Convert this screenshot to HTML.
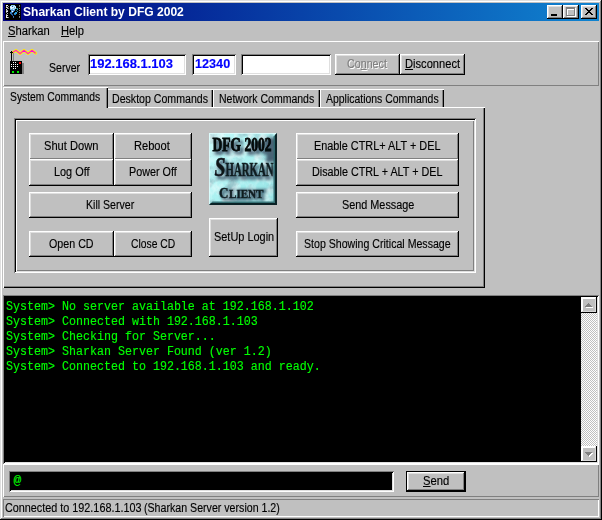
<!DOCTYPE html>
<html>
<head>
<meta charset="utf-8">
<title>Sharkan Client by DFG 2002</title>
<style>
html,body{margin:0;padding:0;}
body{width:602px;height:520px;overflow:hidden;background:#c0c0c0;position:relative;
  font-family:"Liberation Sans",sans-serif;font-size:12px;color:#000;}
*{box-sizing:border-box;}
.abs{position:absolute;}
#win{position:absolute;left:0;top:0;width:602px;height:520px;background:#c0c0c0;
  box-shadow:inset -1px -1px #000,inset 1px 1px #dfdfdf,inset -2px -2px #808080,inset 2px 2px #fff;}
#title{left:3px;top:3px;width:596px;height:18px;background:linear-gradient(90deg,#000080 0%,#1084d0 100%);}
.cap{position:absolute;top:2px;width:16px;height:14px;background:#c0c0c0;
  box-shadow:inset -1px -1px #000,inset 1px 1px #fff,inset -2px -2px #808080,inset 2px 2px #dfdfdf;}
.t{position:absolute;white-space:nowrap;display:inline-block;transform-origin:0 0;-webkit-text-stroke:0.15px currentColor;}
u{text-decoration:underline;text-decoration-thickness:1px;text-underline-offset:1px;text-decoration-skip-ink:none;}
.raised{position:absolute;box-shadow:inset 1px 1px #fff,inset -1px -1px #808080;}
.edit{position:absolute;background:#fff;
  box-shadow:inset 1px 1px #808080,inset -1px -1px #fff,inset 2px 2px #000,inset -2px -2px #dfdfdf;}
.btn{position:absolute;background:#c0c0c0;
  box-shadow:inset -1px -1px #000,inset 1px 1px #fff,inset -2px -2px #808080,inset 2px 2px #dfdfdf;}
.sbtn{box-shadow:inset -1px -1px #000,inset 1px 1px #fff,inset -2px -2px #d8d8d8,inset 2px 2px #fff;}
.tab{position:absolute;background:#c0c0c0;box-shadow:inset 1px 1px #fff,inset -1px 0 #000,inset -2px 0 #808080;}
#conpre{margin:0;font-family:"Liberation Mono",monospace;font-size:11.667px;line-height:13.636px;color:#00ff00;transform:scaleY(1.1);transform-origin:0 0;-webkit-text-stroke:0.15px #00ff00;}
</style>
</head>
<body>
<div id="win">
  <!-- title bar -->
  <div id="title" class="abs">
    <svg class="abs" style="left:2px;top:1px" width="16" height="16" viewBox="0 0 16 16" shape-rendering="crispEdges"><rect width="16" height="16" fill="#000"/><rect x="1" y="1" width="2" height="1" fill="#e8e8e8"/><rect x="1" y="2" width="1" height="1" fill="#a0a0a0"/><rect x="3" y="2" width="1" height="1" fill="#888"/><rect x="1" y="3" width="2" height="1" fill="#d8d8d8"/><rect x="2" y="4" width="2" height="1" fill="#909090"/><rect x="1" y="5" width="1" height="1" fill="#e0e0e0"/><rect x="1" y="6" width="2" height="1" fill="#a8a8a8"/><rect x="1" y="7" width="2" height="1" fill="#e8e8e8"/><rect x="1" y="8" width="1" height="1" fill="#909090"/><rect x="2" y="9" width="1" height="1" fill="#d0d0d0"/><rect x="1" y="10" width="1" height="1" fill="#a0a0a0"/><rect x="1" y="11" width="2" height="1" fill="#e0e0e0"/><rect x="1" y="12" width="1" height="1" fill="#f0f0f0"/><rect x="1" y="13" width="2" height="1" fill="#e8e8e8"/><rect x="3" y="13" width="1" height="1" fill="#888"/><rect x="6" y="1" width="4" height="1" fill="#8ccdf0"/><rect x="5" y="2" width="6" height="1" fill="#bfe6ff"/><rect x="7" y="2" width="1" height="1" fill="#2a5a9a"/><rect x="5" y="3" width="6" height="1" fill="#e4f6ff"/><rect x="9" y="3" width="1" height="1" fill="#6ab0e0"/><rect x="5" y="4" width="6" height="1" fill="#9ad0f0"/><rect x="6" y="4" width="1" height="1" fill="#eaf8ff"/><rect x="11" y="4" width="2" height="1" fill="#2a8a90"/><rect x="5" y="5" width="5" height="1" fill="#70b4e4"/><rect x="8" y="5" width="1" height="1" fill="#c8ecff"/><rect x="12" y="5" width="1" height="1" fill="#30b0c0"/><rect x="6" y="6" width="4" height="1" fill="#4a8ccc"/><rect x="11" y="6" width="1" height="1" fill="#1a6a80"/><rect x="6" y="7" width="3" height="1" fill="#5a9cd4"/><rect x="7" y="7" width="1" height="1" fill="#ffffff"/><rect x="12" y="7" width="1" height="1" fill="#2090a8"/><rect x="5" y="8" width="3" height="1" fill="#3c80c4"/><rect x="10" y="8" width="2" height="1" fill="#2ea4e4"/><rect x="5" y="9" width="2" height="1" fill="#2c6cb0"/><rect x="9" y="9" width="3" height="1" fill="#2ea0e0"/><rect x="6" y="10" width="2" height="1" fill="#1e5ca0"/><rect x="9" y="10" width="2" height="1" fill="#1e84c8"/><rect x="7" y="11" width="1" height="1" fill="#184a88"/><rect x="8" y="12" width="1" height="1" fill="#4878b8"/><rect x="8" y="13" width="1" height="1" fill="#38609c"/><rect x="14" y="1" width="1" height="1" fill="#80888c"/><rect x="14" y="2" width="1" height="1" fill="#70787c"/><rect x="14" y="4" width="1" height="1" fill="#889094"/><rect x="14" y="6" width="1" height="1" fill="#788084"/><rect x="14" y="8" width="1" height="1" fill="#889094"/><rect x="14" y="10" width="1" height="1" fill="#70787c"/><rect x="14" y="12" width="1" height="1" fill="#80888c"/><rect x="14" y="13" width="1" height="1" fill="#687074"/></svg>
    <div class="cap" style="left:544px"><div class="abs" style="left:4px;top:9px;width:6px;height:2px;background:#000"></div></div>
    <div class="cap" style="left:560px"><div class="abs" style="left:3px;top:2px;width:9px;height:9px;border:1px solid #808080;border-top-width:2px;box-shadow:1px 1px #fff,inset 1px 1px #fff"></div></div>
    <div class="cap" style="left:578px">
      <svg class="abs" style="left:4px;top:3px" width="8" height="7" viewBox="0 0 8 7" shape-rendering="crispEdges"><path d="M0 0h2v1h1v1h2v-1h1v-1h2v1h-1v1h-1v1h-1v1h1v1h1v1h1v1h-2v-1h-1v-1h-2v1h-1v1h-2v-1h1v-1h1v-1h1v-1h-1v-1h-1v-1h-1z" fill="#000"/></svg>
    </div>
  </div>

  <!-- toolbar -->
  <div class="raised" style="left:3px;top:41px;width:596px;height:45px"></div>
  <svg class="abs" style="left:8px;top:48px" width="32" height="28" viewBox="0 0 32 28"><polyline points="4.6,4.4 8.0,2.4 12.0,5.6 16.0,2.4 20.0,5.6 24.0,2.4 27.6,5.2" fill="none" stroke="#ffee00" stroke-width="2.8" stroke-linejoin="round" stroke-linecap="round"/><polyline points="4.6,4.4 8.0,2.4 12.0,5.6 16.0,2.4 20.0,5.6 24.0,2.4 27.6,5.2" fill="none" stroke="#ff00e0" stroke-width="1.1" stroke-linejoin="round"/><g shape-rendering="crispEdges"><rect x="3" y="3" width="1" height="11" fill="#000"/><rect x="2" y="4" width="3" height="1" fill="#000"/><rect x="5" y="5" width="1" height="8" fill="#808080"/><rect x="14" y="15" width="2" height="11" fill="#808080"/><rect x="2" y="13" width="12" height="13" fill="#000"/><rect x="5" y="14" width="1" height="1" fill="#fff"/><rect x="7" y="14" width="1" height="1" fill="#fff"/><rect x="3" y="16" width="1" height="1" fill="#fff"/><rect x="5" y="16" width="1" height="1" fill="#fff"/><rect x="7" y="16" width="1" height="1" fill="#fff"/><rect x="9" y="16" width="1" height="1" fill="#fff"/><rect x="3" y="18" width="1" height="1" fill="#fff"/><rect x="5" y="18" width="1" height="1" fill="#fff"/><rect x="7" y="18" width="1" height="1" fill="#fff"/><rect x="9" y="18" width="1" height="1" fill="#fff"/><rect x="5" y="20" width="1" height="1" fill="#fff"/><rect x="7" y="20" width="1" height="1" fill="#fff"/><rect x="11" y="14" width="2" height="2" fill="#ff0000"/><rect x="4" y="23" width="2" height="2" fill="#00e800"/><rect x="9" y="23" width="2" height="2" fill="#00e800"/></g></svg>
  <div class="edit" style="left:88px;top:54px;width:98px;height:21px"></div>
  <div class="edit" style="left:192px;top:54px;width:44px;height:21px"></div>
  <div class="edit" style="left:241px;top:54px;width:90px;height:21px"></div>
  <div class="btn" style="left:335px;top:54px;width:65px;height:21px"></div>
  <div class="btn" style="left:400px;top:54px;width:65px;height:21px"></div>

  <!-- tab control -->
  <div class="abs" style="left:3px;top:107px;width:482px;height:181px;box-shadow:inset 1px 1px #fff,inset -1px -1px #000,inset -2px -2px #808080"></div>
  <div class="tab" style="left:106px;top:89px;width:107px;height:18px"></div>
  <div class="tab" style="left:213px;top:89px;width:107px;height:18px"></div>
  <div class="tab" style="left:320px;top:89px;width:124px;height:18px"></div>
  <div class="tab" style="left:3px;top:87px;width:105px;height:21px"></div>
  <div class="abs" style="left:4px;top:107px;width:102px;height:2px;background:#c0c0c0"></div>

  <!-- inner panel -->
  <div class="abs" style="left:14px;top:118px;width:462px;height:155px;box-shadow:inset 1px 1px #808080,inset -1px -1px #fff,inset 2px 2px #000,inset -2px -2px #dfdfdf,inset 3px 3px #fff,inset -3px -3px #808080"></div>

  <div class="btn" style="left:29px;top:133px;width:85px;height:27px"></div>
  <div class="btn" style="left:114px;top:133px;width:78px;height:27px"></div>
  <div class="btn" style="left:29px;top:159px;width:85px;height:27px"></div>
  <div class="btn" style="left:114px;top:159px;width:78px;height:27px"></div>
  <div class="btn" style="left:29px;top:192px;width:163px;height:26px"></div>
  <div class="btn" style="left:29px;top:231px;width:85px;height:26px"></div>
  <div class="btn" style="left:114px;top:231px;width:78px;height:26px"></div>

  <!-- logo -->
  <svg id="logo" class="abs" style="left:209px;top:133px" width="68" height="72" viewBox="0 0 68 72">
    <defs>
      <filter id="mb" x="0" y="0" width="100%" height="100%">
        <feTurbulence type="fractalNoise" baseFrequency="0.07 0.09" numOctaves="4" seed="11" result="n"/>
        <feColorMatrix in="n" type="matrix" values="0 0 0 0 0.25  0 0 0 0 0.40  0 0 0 0 0.45  2.6 2.6 0 0 -2.45"/>
      </filter>
      <filter id="mw" x="0" y="0" width="100%" height="100%">
        <feTurbulence type="fractalNoise" baseFrequency="0.11 0.08" numOctaves="3" seed="4" result="n"/>
        <feColorMatrix in="n" type="matrix" values="0 0 0 0 0.90  0 0 0 0 1  0 0 0 0 1  0 2.4 2.4 0 -2.2"/>
      </filter>
      <filter id="bl" x="-20%" y="-20%" width="140%" height="140%"><feGaussianBlur stdDeviation="1.6"/></filter>
      <filter id="bs" x="-10%" y="-10%" width="120%" height="120%"><feGaussianBlur stdDeviation="0.35"/></filter>
      <linearGradient id="lg" x1="0" y1="0" x2="1" y2="1"><stop offset="0" stop-color="#c4fafa"/><stop offset="0.55" stop-color="#a8f0f0"/><stop offset="1" stop-color="#94e0e2"/></linearGradient>
    </defs>
    <rect width="68" height="72" fill="url(#lg)"/>
    <rect width="68" height="72" filter="url(#mb)" opacity="0.62"/>
    <rect width="68" height="72" filter="url(#mw)" opacity="0.6"/>
    <g font-family="'Liberation Serif',serif" font-weight="bold" fill="#3c5468" stroke="#3c5468" stroke-width="1.5" filter="url(#bl)" opacity="0.9">
      <text x="6" y="21" font-size="19" textLength="60" lengthAdjust="spacingAndGlyphs">DFG 2002</text>
      <text x="8" y="46" font-size="27" textLength="12" lengthAdjust="spacingAndGlyphs">S</text>
      <text x="19" y="46" font-size="18" textLength="48" lengthAdjust="spacingAndGlyphs">HARKAN</text>
      <text x="12" y="67" font-size="15" textLength="45" lengthAdjust="spacingAndGlyphs">CLIENT</text>
      <rect x="58" y="6" width="8" height="22"/>
    </g>
    <g font-family="'Liberation Serif',serif" font-weight="bold" filter="url(#bs)">
      <text x="3.5" y="18.3" font-size="19" fill="#050808" textLength="59" lengthAdjust="spacingAndGlyphs" stroke="#050808" stroke-width="0.8">DFG 2002</text>
      <text x="5.5" y="43" font-size="27.5" fill="#0c1418" stroke="#0c1418" stroke-width="0.5" textLength="11" lengthAdjust="spacingAndGlyphs" font-style="italic">S</text>
      <text x="16.5" y="43" font-size="18" fill="#101c20" stroke="#101c20" stroke-width="0.5" textLength="48" lengthAdjust="spacingAndGlyphs">HARKAN</text>
      <text x="10" y="64.5" font-size="15" fill="#101c20" stroke="#101c20" stroke-width="0.4" textLength="9.5" lengthAdjust="spacingAndGlyphs">C</text>
      <text x="20" y="64.5" font-size="12" fill="#101c20" stroke="#101c20" stroke-width="0.4" textLength="34.5" lengthAdjust="spacingAndGlyphs">LIENT</text>
    </g>
    <path d="M0 0H68V1H1V72H0z" fill="#e0ffff" opacity="0.8"/>
    <path d="M68 0V72H0L3.500000 68.500000H64.500000V3.500000z" fill="#2a6468" opacity="0.9"/>
    <path d="M68 0V72H0L2 70H66V2z" fill="#0a2226"/>
  </svg>
  <div class="btn" style="left:209px;top:218px;width:69px;height:39px"></div>

  <div class="btn" style="left:296px;top:133px;width:163px;height:27px"></div>
  <div class="btn" style="left:296px;top:159px;width:163px;height:27px"></div>
  <div class="btn" style="left:296px;top:192px;width:163px;height:26px"></div>
  <div class="btn" style="left:296px;top:231px;width:163px;height:26px"></div>

  <!-- console -->
  <div class="abs" style="left:3px;top:295px;width:596px;height:169px;background:#000;box-shadow:inset 1px 1px #808080,inset -1px -1px #fff,inset 2px 2px #000,inset -2px -2px #dfdfdf">
    <pre id="conpre" class="abs" style="left:3px;top:5px">System&gt; No server available at 192.168.1.102
System&gt; Connected with 192.168.1.103
System&gt; Checking for Server...
System&gt; Sharkan Server Found (ver 1.2)
System&gt; Connected to 192.168.1.103 and ready.</pre>
    <div class="abs" style="left:578px;top:2px;width:16px;height:165px;background-color:#c0c0c0;background-image:linear-gradient(45deg,#fff 25%,transparent 25%,transparent 75%,#fff 75%),linear-gradient(45deg,#fff 25%,transparent 25%,transparent 75%,#fff 75%);background-size:2px 2px;background-position:0 0,1px 1px">
      <div class="btn sbtn" style="left:0;top:0px;width:16px;height:16px"><svg class="abs" style="left:0;top:0" width="16" height="16" viewBox="0 0 16 16" shape-rendering="crispEdges"><rect x="8" y="7" width="1" height="1" fill="#fff"/><rect x="7" y="8" width="3" height="1" fill="#fff"/><rect x="6" y="9" width="5" height="1" fill="#fff"/><rect x="5" y="10" width="7" height="1" fill="#fff"/><rect x="7" y="6" width="1" height="1" fill="#808080"/><rect x="6" y="7" width="3" height="1" fill="#808080"/><rect x="5" y="8" width="5" height="1" fill="#808080"/><rect x="4" y="9" width="7" height="1" fill="#808080"/></svg></div>
      <div class="btn sbtn" style="left:0;top:149px;width:16px;height:16px"><svg class="abs" style="left:0;top:0" width="16" height="16" viewBox="0 0 16 16" shape-rendering="crispEdges"><rect x="5" y="7" width="7" height="1" fill="#fff"/><rect x="6" y="8" width="5" height="1" fill="#fff"/><rect x="7" y="9" width="3" height="1" fill="#fff"/><rect x="8" y="10" width="1" height="1" fill="#fff"/><rect x="4" y="6" width="7" height="1" fill="#808080"/><rect x="5" y="7" width="5" height="1" fill="#808080"/><rect x="6" y="8" width="3" height="1" fill="#808080"/><rect x="7" y="9" width="1" height="1" fill="#808080"/></svg></div>
    </div>
  </div>

  <!-- send panel -->
  <div class="raised" style="left:3px;top:464px;width:596px;height:33px"></div>
  <div class="abs" style="left:9px;top:471px;width:385px;height:21px;background:#000;box-shadow:inset 1px 1px #808080,inset -1px -1px #fff,inset 2px 2px #000,inset -2px -2px #dfdfdf">
    <span class="abs" style="left:4.5px;top:2px;font-family:'Liberation Mono',monospace;font-size:13px;line-height:15px;color:#00ff00;-webkit-text-stroke:0.1px #00ff00">@</span>
  </div>
  <div class="abs" style="left:406px;top:471px;width:60px;height:21px;background:#000"></div>
  <div class="btn" style="left:407px;top:472px;width:58px;height:19px"></div>

  <!-- status bar -->
  <div class="abs" style="left:3px;top:499px;width:596px;height:18px;box-shadow:inset 1px 1px #808080,inset -1px -1px #fff"></div>

<span class="t" id="ttl" style="left:23.33px;top:4.00px;font-size:13px;line-height:15px;transform:scaleX(0.9273);color:#fff;font-weight:bold;-webkit-text-stroke:0">Sharkan Client by DFG 2002</span>
<span class="t" id="m1" style="left:8.47px;top:23.84px;font-size:12px;line-height:14px;transform:scaleX(0.9353);"><u>S</u>harkan</span>
<span class="t" id="m2" style="left:60.59px;top:23.84px;font-size:12px;line-height:14px;transform:scaleX(0.9283);"><u>H</u>elp</span>
<span class="t" id="srv" style="left:49.22px;top:60.84px;font-size:12px;line-height:14px;transform:scaleX(0.8783);">Server</span>
<span class="t" id="ip" style="left:90.19px;top:56.00px;font-size:13px;line-height:15px;transform:scaleX(0.9966);color:#0000ff;font-weight:bold">192.168.1.103</span>
<span class="t" id="port" style="left:195.01px;top:56.00px;font-size:13px;line-height:15px;transform:scaleX(0.9729);color:#0000ff;font-weight:bold">12340</span>
<span class="t" id="con" style="left:347.43px;top:56.84px;font-size:12px;line-height:14px;transform:scaleX(0.8914);color:#808080;text-shadow:1px 1px #fff">Co<u>n</u>nect</span>
<span class="t" id="dis" style="left:404.69px;top:56.84px;font-size:12px;line-height:14px;transform:scaleX(0.9277);"><u>D</u>isconnect</span>
<span class="t" id="tb1" style="left:10.43px;top:89.84px;font-size:12px;line-height:14px;transform:scaleX(0.8612);">System Commands</span>
<span class="t" id="tb2" style="left:111.63px;top:91.84px;font-size:12px;line-height:14px;transform:scaleX(0.8830);">Desktop Commands</span>
<span class="t" id="tb3" style="left:219.14px;top:91.84px;font-size:12px;line-height:14px;transform:scaleX(0.8755);">Network Commands</span>
<span class="t" id="tb4" style="left:325.99px;top:91.84px;font-size:12px;line-height:14px;transform:scaleX(0.8705);">Applications Commands</span>
<span class="t" id="b1" style="left:44.38px;top:138.84px;font-size:12px;line-height:14px;transform:scaleX(0.9266);">Shut Down</span>
<span class="t" id="b2" style="left:134.49px;top:138.84px;font-size:12px;line-height:14px;transform:scaleX(0.9248);">Reboot</span>
<span class="t" id="b3" style="left:53.51px;top:164.84px;font-size:12px;line-height:14px;transform:scaleX(0.9075);">Log Off</span>
<span class="t" id="b4" style="left:128.72px;top:164.84px;font-size:12px;line-height:14px;transform:scaleX(0.8978);">Power Off</span>
<span class="t" id="b5" style="left:86.43px;top:197.84px;font-size:12px;line-height:14px;transform:scaleX(0.8814);">Kill Server</span>
<span class="t" id="b6" style="left:48.77px;top:236.84px;font-size:12px;line-height:14px;transform:scaleX(0.8911);">Open CD</span>
<span class="t" id="b7" style="left:130.95px;top:236.84px;font-size:12px;line-height:14px;transform:scaleX(0.8596);">Close CD</span>
<span class="t" id="b8" style="left:213.69px;top:229.84px;font-size:12px;line-height:14px;transform:scaleX(0.9105);">SetUp Login</span>
<span class="t" id="b9" style="left:313.51px;top:138.84px;font-size:12px;line-height:14px;transform:scaleX(0.9054);">Enable CTRL+ ALT + DEL</span>
<span class="t" id="b10" style="left:311.62px;top:164.84px;font-size:12px;line-height:14px;transform:scaleX(0.8983);">Disable CTRL + ALT + DEL</span>
<span class="t" id="b11" style="left:341.60px;top:197.84px;font-size:12px;line-height:14px;transform:scaleX(0.9035);">Send Message</span>
<span class="t" id="b12" style="left:303.81px;top:236.84px;font-size:12px;line-height:14px;transform:scaleX(0.8828);">Stop Showing Critical Message</span>
<span class="t" id="snd" style="left:422.57px;top:473.84px;font-size:12px;line-height:14px;transform:scaleX(0.9379);"><u>S</u>end</span>
<span class="t" id="st" style="left:4.92px;top:500.84px;font-size:12px;line-height:14px;transform:scaleX(0.9010);">Connected to 192.168.1.103</span>
<span class="t" id="st2" style="left:143.80px;top:500.84px;font-size:12px;line-height:14px;transform:scaleX(0.8854);">(Sharkan Server version 1.2)</span>
</div>
</body>
</html>
